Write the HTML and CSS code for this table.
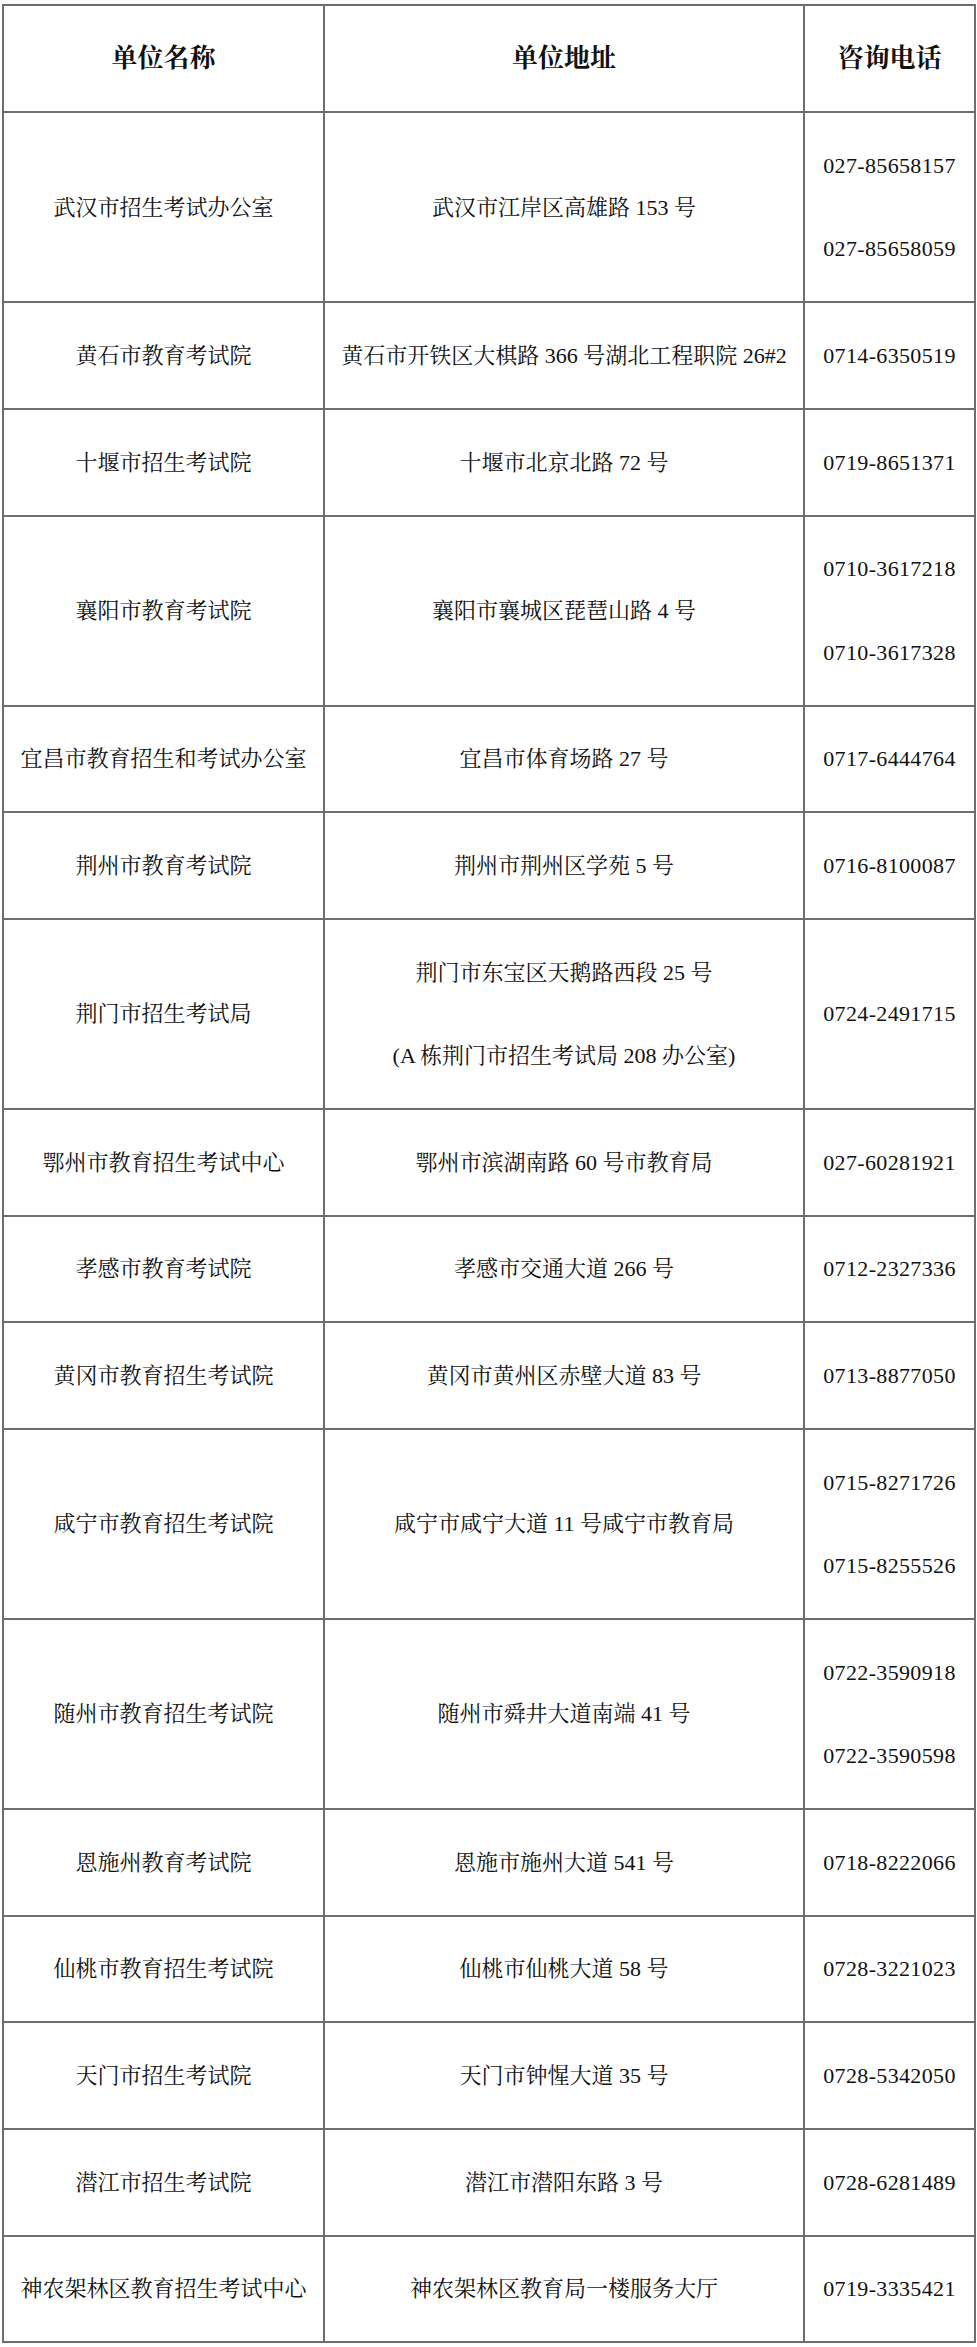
FILE: index.html
```html
<!DOCTYPE html>
<html lang="zh-CN">
<head>
<meta charset="utf-8">
<title>咨询电话</title>
<link rel="stylesheet" href="styles.css">
</head>
<body>
<table class="sheet">
  <colgroup>
    <col class="c-name">
    <col class="c-addr">
    <col class="c-tel">
  </colgroup>
  <thead>
    <tr><th>单位名称</th><th>单位地址</th><th>咨询电话</th></tr>
  </thead>
  <tbody>
    <tr><td>武汉市招生考试办公室</td><td>武汉市江岸区高雄路 153 号</td><td class="tel">027-85658157<br>027-85658059</td></tr>
    <tr><td>黄石市教育考试院</td><td>黄石市开铁区大棋路 366 号湖北工程职院 26#2</td><td class="tel">0714-6350519</td></tr>
    <tr><td>十堰市招生考试院</td><td>十堰市北京北路 72 号</td><td class="tel">0719-8651371</td></tr>
    <tr><td>襄阳市教育考试院</td><td>襄阳市襄城区琵琶山路 4 号</td><td class="tel">0710-3617218<br>0710-3617328</td></tr>
    <tr><td>宜昌市教育招生和考试办公室</td><td>宜昌市体育场路 27 号</td><td class="tel">0717-6444764</td></tr>
    <tr><td>荆州市教育考试院</td><td>荆州市荆州区学苑 5 号</td><td class="tel">0716-8100087</td></tr>
    <tr><td>荆门市招生考试局</td><td>荆门市东宝区天鹅路西段 25 号<br>(A 栋荆门市招生考试局 208 办公室)</td><td class="tel">0724-2491715</td></tr>
    <tr><td>鄂州市教育招生考试中心</td><td>鄂州市滨湖南路 60 号市教育局</td><td class="tel">027-60281921</td></tr>
    <tr><td>孝感市教育考试院</td><td>孝感市交通大道 266 号</td><td class="tel">0712-2327336</td></tr>
    <tr><td>黄冈市教育招生考试院</td><td>黄冈市黄州区赤壁大道 83 号</td><td class="tel">0713-8877050</td></tr>
    <tr><td>咸宁市教育招生考试院</td><td>咸宁市咸宁大道 11 号咸宁市教育局</td><td class="tel">0715-8271726<br>0715-8255526</td></tr>
    <tr><td>随州市教育招生考试院</td><td>随州市舜井大道南端 41 号</td><td class="tel">0722-3590918<br>0722-3590598</td></tr>
    <tr><td>恩施州教育考试院</td><td>恩施市施州大道 541 号</td><td class="tel">0718-8222066</td></tr>
    <tr><td>仙桃市教育招生考试院</td><td>仙桃市仙桃大道 58 号</td><td class="tel">0728-3221023</td></tr>
    <tr><td>天门市招生考试院</td><td>天门市钟惺大道 35 号</td><td class="tel">0728-5342050</td></tr>
    <tr><td>潜江市招生考试院</td><td>潜江市潜阳东路 3 号</td><td class="tel">0728-6281489</td></tr>
    <tr><td>神农架林区教育招生考试中心</td><td>神农架林区教育局一楼服务大厅</td><td class="tel">0719-3335421</td></tr>
  </tbody>
</table>
</body>
</html>
```

FILE: styles.css
```css
html, body {
  margin: 0;
  padding: 0;
  background: #ffffff;
}

body {
  padding: 4px 0 0 2px;
  font-family: "Liberation Serif", "Noto Serif CJK SC", "Noto Sans CJK SC", serif;
  color: #111111;
}

.sheet {
  border-collapse: collapse;
  table-layout: fixed;
  width: 974px;
}

.c-name { width: 321px; }
.c-addr { width: 480px; }
.c-tel { width: 171px; }

.sheet th,
.sheet td {
  border: 2px solid #6e6e6e;
  text-align: center;
  vertical-align: middle;
  padding: 10.7px 0;
  line-height: 83.3px;
  font-size: 22px;
  white-space: nowrap;
}

.sheet th {
  font-size: 26px;
  font-weight: bold;
  padding: 11px 0;
}

.sheet .tel {
  letter-spacing: 0.35px;
}
```
